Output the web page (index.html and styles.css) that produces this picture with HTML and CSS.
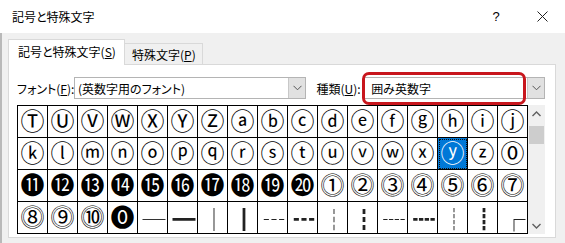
FILE: index.html
```html
<!DOCTYPE html>
<html lang="ja">
<head>
    <meta charset="UTF-8">
    <meta name="viewport" content="width=device-width, initial-scale=1.0">
    <title>記号と特殊文字</title>
    <link rel="stylesheet" href="styles.css">
</head>
<body>
    <div class="window">
        <div class="titlebar">
            <span class="title">記号と特殊文字</span>
            <span class="title-btn help">?</span>
            <span class="title-btn close">
                <svg width="11" height="11" viewBox="0 0 11 11"><path d="M0.5 0.5L10.5 10.5M10.5 0.5L0.5 10.5" stroke="#222" stroke-width="1" fill="none"/></svg>
            </span>
        </div>

        <div class="dialog">
            <div class="tabs">
                <div class="tab active">記号と特殊文字(<u>S</u>)</div>
                <div class="tab">特殊文字(<u>P</u>)</div>
            </div>

            <div class="panel">
                <div class="font-row">
                    <span class="label font-label">フォント(<u>F</u>):</span>
                    <div class="combo combo-font">
                        <span class="combo-text">(英数字用のフォント)</span>
                        <span class="combo-arrow">
                            <svg width="9" height="6" viewBox="0 0 9 6"><path d="M0.5 0.8L4.5 4.8L8.5 0.8" stroke="#555" stroke-width="1" fill="none"/></svg>
                        </span>
                    </div>
                    <span class="label kind-label">種類(<u>U</u>):</span>
                    <div class="combo combo-kind">
                        <span class="combo-text">囲み英数字</span>
                        <span class="combo-arrow">
                            <svg width="9" height="6" viewBox="0 0 9 6"><path d="M0.5 0.8L4.5 4.8L8.5 0.8" stroke="#555" stroke-width="1" fill="none"/></svg>
                        </span>
                        <div class="highlight"></div>
                    </div>
                </div>

                <div class="chars">
                    <div class="grid">
                        <div class="cell">Ⓣ</div><div class="cell">Ⓤ</div><div class="cell">Ⓥ</div><div class="cell">Ⓦ</div><div class="cell">Ⓧ</div><div class="cell">Ⓨ</div><div class="cell">Ⓩ</div><div class="cell">ⓐ</div><div class="cell">ⓑ</div><div class="cell">ⓒ</div><div class="cell">ⓓ</div><div class="cell">ⓔ</div><div class="cell">ⓕ</div><div class="cell">ⓖ</div><div class="cell">ⓗ</div><div class="cell">ⓘ</div><div class="cell">ⓙ</div>

                        <div class="cell">ⓚ</div><div class="cell">ⓛ</div><div class="cell">ⓜ</div><div class="cell">ⓝ</div><div class="cell">ⓞ</div><div class="cell">ⓟ</div><div class="cell">ⓠ</div><div class="cell">ⓡ</div><div class="cell">ⓢ</div><div class="cell">ⓣ</div><div class="cell">ⓤ</div><div class="cell">ⓥ</div><div class="cell">ⓦ</div><div class="cell">ⓧ</div><div class="cell selected">ⓨ</div><div class="cell">ⓩ</div><div class="cell">⓪</div>

                        <div class="cell">⓫</div><div class="cell">⓬</div><div class="cell">⓭</div><div class="cell">⓮</div><div class="cell">⓯</div><div class="cell">⓰</div><div class="cell">⓱</div><div class="cell">⓲</div><div class="cell">⓳</div><div class="cell">⓴</div><div class="cell">⓵</div><div class="cell">⓶</div><div class="cell">⓷</div><div class="cell">⓸</div><div class="cell">⓹</div><div class="cell">⓺</div><div class="cell">⓻</div>

                        <div class="cell">⓼</div><div class="cell">⓽</div><div class="cell">⓾</div><div class="cell">⓿</div><div class="cell box">─</div><div class="cell box">━</div><div class="cell box">│</div><div class="cell box">┃</div><div class="cell box">┄</div><div class="cell box">┅</div><div class="cell box">┆</div><div class="cell box">┇</div><div class="cell box">┈</div><div class="cell box">┉</div><div class="cell box">┊</div><div class="cell box">┋</div><div class="cell box">┌</div>
                    </div>

                    <div class="scrollbar">
                        <span class="scroll-arrow">
                            <svg width="9" height="6" viewBox="0 0 9 6"><path d="M0.5 5L4.5 1L8.5 5" stroke="#606060" stroke-width="1.4" fill="none"/></svg>
                        </span>
                        <span class="scroll-thumb"></span>
                        <span class="scroll-space"></span>
                        <span class="scroll-arrow">
                            <svg width="9" height="6" viewBox="0 0 9 6"><path d="M0.5 1L4.5 5L8.5 1" stroke="#606060" stroke-width="1.4" fill="none"/></svg>
                        </span>
                    </div>
                </div>
            </div>
        </div>
    </div>
</body>
</html>
```

FILE: styles.css
```css
* {
    margin: 0;
    padding: 0;
    box-sizing: border-box;
}

body {
    background: #f0f0f0;
    font-family: 'Noto Sans CJK JP', 'Noto Sans', sans-serif;
    font-size: 12px;
    color: #000;
    overflow: hidden;
}

.window {
    width: 565px;
    height: 243px;
    display: flex;
    flex-direction: column;
}

.titlebar {
    height: 33px;
    background: #fff;
    display: flex;
    align-items: center;
    padding-left: 12px;
}

.title {
    flex: 1;
    font-size: 12px;
    font-feature-settings: "palt";
}

.title-btn {
    display: flex;
    align-items: center;
    justify-content: center;
    height: 33px;
}

.help {
    width: 46px;
    font-family: 'Liberation Sans', sans-serif;
    font-size: 13px;
}

.close {
    width: 46px;
}

.dialog {
    flex: 1;
    padding: 5px 9px 0 6px;
    border-left: 2px solid #b9b9b9;
}

.tabs {
    display: flex;
    align-items: flex-end;
    height: 26px;
    position: relative;
    z-index: 1;
}

.tab {
    width: 78px;
    height: 21px;
    padding-left: 7px;
    display: flex;
    align-items: center;
    background: #f0f0f0;
    border: 1px solid #d9d9d9;
    border-left: none;
    border-bottom: none;
    font-feature-settings: "palt";
    white-space: nowrap;
}

.tab.active {
    width: 117px;
    height: 26px;
    margin-bottom: -1px;
    padding-left: 9px;
    padding-bottom: 2px;
    background: #fff;
    border-left: 1px solid #d9d9d9;
}

.panel {
    background: #fff;
    border: 1px solid #d9d9d9;
    padding: 0 10px 3px 8px;
}

.font-row {
    display: flex;
    align-items: center;
    height: 22px;
    margin-top: 12px;
    margin-bottom: 6px;
}

.label {
    font-feature-settings: "palt";
    white-space: nowrap;
}

.font-label {
    width: 57px;
}

.kind-label {
    width: 48px;
    margin-left: 10px;
}

.combo {
    height: 22px;
    border: 1px solid #b4b4b4;
    display: flex;
    align-items: center;
    position: relative;
}

.combo-font {
    width: 234px;
}

.combo-kind {
    width: 182px;
}

.combo-text {
    flex: 1;
    padding-left: 3px;
    font-feature-settings: "palt";
    white-space: nowrap;
}

.combo-kind .combo-text {
    padding-left: 6px;
}

.combo-arrow {
    width: 17px;
    height: 20px;
    background: #e1e1e1;
    border-left: 1px solid #c8c8c8;
    display: flex;
    align-items: center;
    justify-content: center;
}

.highlight {
    position: absolute;
    left: -3px;
    top: -6px;
    width: 164px;
    height: 33px;
    border: 3px solid #c8161d;
    border-radius: 7px;
}

.chars {
    display: flex;
}

.grid {
    display: grid;
    grid-template-columns: repeat(17, 30px);
    grid-template-rows: repeat(4, 32px);
    border-left: 1px solid #000;
    border-top: 1px solid #000;
    border-bottom: 1px solid #000;
    height: 129px;
}

.cell {
    border-right: 1px solid #000;
    border-bottom: 1px solid #000;
    display: flex;
    align-items: center;
    justify-content: center;
    font-family: 'DejaVu Sans', 'Noto Sans CJK JP', sans-serif;
    font-size: 24px;
    line-height: 1;
}

.grid .cell:nth-last-child(-n+17) {
    border-bottom: none;
}

.cell.box {
    font-family: 'Noto Sans CJK JP', 'DejaVu Sans', sans-serif;
    font-size: 23px;
    padding-left: 3px;
    color: #222;
    will-change: transform;
}

.cell.selected {
    background: #0078d7;
    color: #fff;
    outline: 1px dotted #111;
    outline-offset: -2px;
}

.scrollbar {
    width: 17px;
    height: 129px;
    background: #f0f0f0;
    display: flex;
    flex-direction: column;
    align-items: center;
}

.scroll-arrow {
    height: 17px;
    width: 17px;
    display: flex;
    align-items: center;
    justify-content: center;
}

.scroll-thumb {
    margin-top: 4px;
    width: 15px;
    height: 18px;
    background: #cdcdcd;
}

.scroll-space {
    flex: 1;
}
```
